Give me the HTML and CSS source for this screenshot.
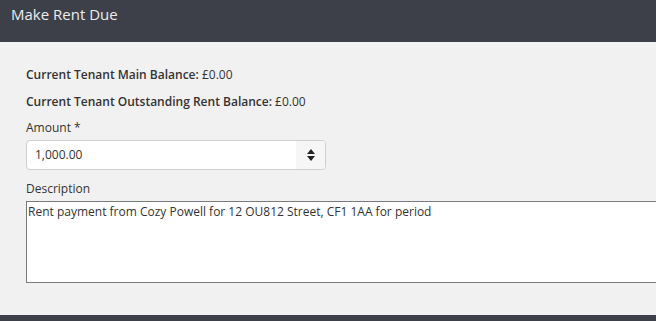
FILE: index.html
```html
<!DOCTYPE html>
<html>
<head>
<meta charset="utf-8">
<link rel="stylesheet" href="styles.css">
</head>
<body>
<div class="modal">
  <div class="modal-header"><h4 class="title">Make Rent Due</h4></div>
  <div class="modal-body">
    <p class="balance"><strong>Current Tenant Main Balance:</strong> £0.00</p>
    <p class="balance"><strong>Current Tenant Outstanding Rent Balance:</strong> £0.00</p>
    <label class="label">Amount *</label>
    <div class="number-input">
      <span class="value">1,000.00</span>
      <span class="spinner">
        <svg width="10" height="14" viewBox="0 0 10 14"><path d="M5 1 L9 6 L1 6 Z" fill="#222"/><path d="M1 8 L9 8 L5 13 Z" fill="#222"/></svg>
      </span>
    </div>
    <label class="label desc-label">Description</label>
    <div class="textarea">Rent payment from Cozy Powell for 12 OU812 Street, CF1 1AA for period</div>
  </div>
  <div class="modal-footer"></div>
</div>
</body>
</html>
```
FILE: styles.css
```css
html, body {
  margin: 0;
  padding: 0;
  overflow: hidden;
  background: #f1f1f1;
}
body {
  font-family: "Open Sans", "Noto Sans", sans-serif;
  color: #333;
  width: 656px;
  height: 321px;
}
.modal {
  display: flex;
  flex-direction: column;
}
.modal-header {
  height: 42px;
  box-sizing: border-box;
  background: #3d4049;
  padding: 4px 11px 0;
}
.title {
  margin: 0;
  font-size: 15px;
  line-height: 20px;
  font-weight: 400;
  color: #ececec;
}
.modal-body {
  height: 273px;
  box-sizing: border-box;
  padding: 24px 0 0 26px;
  display: flex;
  flex-direction: column;
  align-items: flex-start;
}
.balance {
  margin: 0 0 9px;
  font-size: 12px;
  line-height: 18px;
  color: #333;
}
.balance strong {
  font-weight: 600;
}
.label {
  font-size: 12px;
  line-height: 18px;
  margin: -1px 0 3px;
  color: #333;
}
.desc-label {
  margin-top: 10px;
}
.number-input {
  width: 300px;
  height: 30px;
  box-sizing: border-box;
  border: 1px solid #cfcfcf;
  border-radius: 4px;
  background: #fff;
  display: flex;
  overflow: hidden;
}
.value {
  flex: 1;
  font-size: 12px;
  line-height: 28px;
  padding-left: 8px;
  color: #333;
}
.spinner {
  width: 29px;
  background: #f6f6f6;
  display: flex;
  align-items: center;
  justify-content: center;
}
.textarea {
  width: 660px;
  height: 82px;
  box-sizing: border-box;
  border: 1px solid #7a7a7a;
  background: #fff;
  font-size: 12px;
  line-height: 16px;
  padding: 2px 1px;
  color: #333;
}
.modal-footer {
  height: 6px;
  background: #3d4049;
}
```
